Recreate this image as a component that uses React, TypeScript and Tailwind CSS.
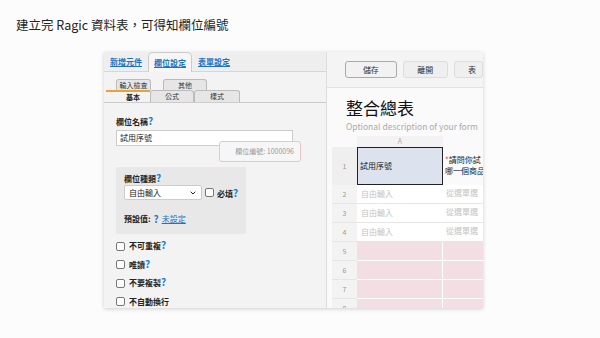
import { ChevronDown } from 'lucide-react';

const font = { fontFamily: '"Noto Sans CJK TC", "Liberation Sans", sans-serif' };

function Help() {
  return <span className="text-[#1a7fd6] font-bold">?</span>;
}

function Check({ label, help = true }: { label: string; help?: boolean }) {
  return (
    <div className="flex items-center gap-[4px] h-[18.5px]">
      <span className="w-[9px] h-[9px] border border-[#777] rounded-[2px] bg-white" />
      <span className="text-[8px] font-bold text-[#222]">
        {label}
        {help && <span className="text-[10px] leading-none"><Help /></span>}
      </span>
    </div>
  );
}

const rows = [2, 3, 4];
const pinkRows = [5, 6, 7, 8];

export default function App() {
  return (
    <div className="w-[600px] h-[338px] bg-[#fdfcfd] overflow-hidden" style={font}>
      <div className="pt-[16px] pl-[16px] text-[12.5px] leading-[18px] text-[#222]">
        建立完 Ragic 資料表，可得知欄位編號
      </div>

      <div className="mt-[18px] ml-[104px] w-[379px] h-[256px] flex bg-white shadow-[0_1px_4px_rgba(0,0,0,0.18)] overflow-hidden">
        {/* left: field settings */}
        <div className="w-[223px] shrink-0 bg-[#f3f3f3] border-r border-[#ddd] flex flex-col">
          <div className="h-[24px] flex items-end gap-[6px] pl-[6px] border-b border-[#d6d6d6] bg-[#eeeeee]">
            <span className="pb-[3px] text-[8px] font-bold text-[#1a73c8] underline">新增元件</span>
            <span className="h-[20px] px-[5px] flex items-center text-[8px] font-bold text-[#1a73c8] underline bg-[#f6f6f6] border border-b-0 border-[#ccc] rounded-t-[5px] -mb-px">欄位設定</span>
            <span className="pb-[3px] text-[8px] font-bold text-[#1a73c8] underline">表單設定</span>
          </div>

          <div className="pt-[7px] flex flex-col">
            <div className="flex pl-[12px] gap-[12px]">
              <span className="w-[35px] h-[11px] text-center text-[7px] leading-[11px] text-[#333] bg-[#e6e6e6] border border-b-0 border-[#bbb] rounded-t-[3px]">輸入檢查</span>
              <span className="w-[44px] h-[11px] text-center text-[7px] leading-[11px] text-[#333] bg-[#e6e6e6] border border-b-0 border-[#bbb] rounded-t-[3px]">其他</span>
            </div>
            <div className="flex pl-[2px] border-b border-[#ccc]">
              <span className="w-[44px] h-[12px] text-center text-[7px] leading-[10px] font-bold text-[#222] border-t-2 border-[#e8a23b] pl-[10px]">基本</span>
              <span className="w-[44px] h-[12px] text-center text-[7px] leading-[11px] text-[#333] bg-[#e6e6e6] border border-b-0 border-[#bbb] rounded-t-[3px]">公式</span>
              <span className="w-[46px] h-[12px] text-center text-[7px] leading-[11px] text-[#333] bg-[#e6e6e6] border border-b-0 border-[#bbb] rounded-t-[3px]">樣式</span>
            </div>
          </div>

          <div className="pl-[12px] pt-[13px] flex flex-col">
            <div className="text-[8px] font-bold text-[#222] leading-[10px]">欄位名稱<span className="text-[10px]"><Help /></span></div>
            <div className="mt-[3px] w-[177px] h-[16px] bg-white border border-[#ccc] px-[3px] text-[8px] leading-[14px] text-[#222]">試用序號</div>
            <div className="-mt-[5px] ml-[103px] w-[82px] h-[21px] border border-[#efc3c8] rounded-[3px] bg-[#f6f6f6] flex items-center justify-end pr-[6px] text-[7px] text-[#999]">
              欄位編號: 1000096
            </div>

            <div className="mt-[5px] w-[130px] h-[67px] bg-[#e8e8e8] rounded-[2px] pl-[8px] pt-[6px] flex flex-col">
              <div className="text-[8px] font-bold text-[#222] leading-[10px]">欄位種類<span className="text-[10px]"><Help /></span></div>
              <div className="mt-[1px] flex items-center gap-[3px]">
                <div className="w-[78px] h-[15px] bg-white border border-[#ccc] rounded-[2px] flex items-center justify-between px-[4px] text-[8px] text-[#222]">
                  自由輸入
                  <ChevronDown size={8} strokeWidth={3} />
                </div>
                <span className="w-[9px] h-[9px] border border-[#777] rounded-[2px] bg-white" />
                <span className="text-[8px] font-bold text-[#222]">必填<span className="text-[10px]"><Help /></span></span>
              </div>
              <div className="mt-[11px] text-[8px] font-bold text-[#222] flex items-center gap-[3px]">
                預設值: <span className="text-[10px]"><Help /></span>
                <span className="font-normal text-[#1a73c8] underline">未設定</span>
              </div>
            </div>

            <div className="mt-[3px] flex flex-col">
              <Check label="不可重複" />
              <Check label="唯讀" />
              <Check label="不要複製" />
              <Check label="不自動換行" help={false} />
            </div>
          </div>
        </div>

        {/* right: sheet */}
        <div className="flex-1 min-w-0 flex flex-col bg-[#fafafa]">
          <div className="h-[36px] shrink-0 bg-[#f4f4f4] border-b border-[#e2e2e2] flex items-center gap-[6px] pl-[18px]">
            <span className="w-[55px] h-[17px] bg-[#f2f2f2] border border-[#aaa] rounded-[3px] text-[8px] text-[#333] flex items-center justify-center">儲存</span>
            <span className="w-[48px] h-[17px] bg-[#efefef] border border-[#ddd] rounded-[3px] text-[8px] text-[#333] flex items-center justify-center">離開</span>
            <span className="w-[30px] h-[17px] bg-[#efefef] border border-[#ddd] rounded-[3px] text-[8px] text-[#333] flex items-center pl-[13px]">表</span>
          </div>

          <div className="pl-[19px] pt-[9px] text-[17px] leading-[22px] text-[#111]">整合總表</div>
          <div className="pl-[19px] pt-[1px] text-[8.5px] leading-[12px] text-[#aaa] whitespace-nowrap">Optional description of your form</div>

          <div className="mt-[4px] ml-[5px] flex flex-col">
            <div className="flex h-[11px]">
              <div className="w-[25px]" />
              <div className="w-[86px] text-center text-[7px] leading-[11px] text-[#aaa] bg-[#f3f3f3]">A</div>
            </div>
            <div className="flex h-[38px]">
              <div className="w-[25px] bg-[#efefef] flex items-center justify-center text-[7px] text-[#999]">1</div>
              <div className="w-[86px] border-[1.5px] border-[#222] bg-[#dde3ee] flex items-center pl-[2px] text-[8px] text-[#222]">試用序號</div>
              <div className="flex-1 pl-[2px] pt-[7px] text-[8px] leading-[11px] text-[#222] whitespace-nowrap overflow-hidden">
                <span className="text-[#e33]">*</span>請問你試<br />哪一個商品
              </div>
            </div>
            {rows.map((r) => (
              <div key={r} className="flex h-[19px]">
                <div className="w-[25px] bg-[#f3f3f3] border-b border-[#e6e6e6] flex items-center justify-center text-[7px] text-[#999]">{r}</div>
                <div className="w-[86px] bg-white border-b border-[#e6e6e6] flex items-center pl-[4px] text-[8px] text-[#c4c4c4]">自由輸入</div>
                <div className="flex-1 bg-white border-b border-[#e6e6e6] flex items-start pt-[2px] pl-[3px] text-[8px] text-[#c4c4c4] whitespace-nowrap overflow-hidden">從選單選</div>
              </div>
            ))}
            {pinkRows.map((r) => (
              <div key={r} className="flex h-[19px]">
                <div className="w-[25px] bg-[#f3f3f3] border-b border-[#e6e6e6] flex items-center justify-center text-[7px] text-[#999]">{r}</div>
                <div className="w-[86px] bg-[#f3dfe3] border-b border-r border-white" />
                <div className="flex-1 bg-[#f3dfe3] border-b border-white" />
              </div>
            ))}
          </div>
        </div>
      </div>
    </div>
  );
}
